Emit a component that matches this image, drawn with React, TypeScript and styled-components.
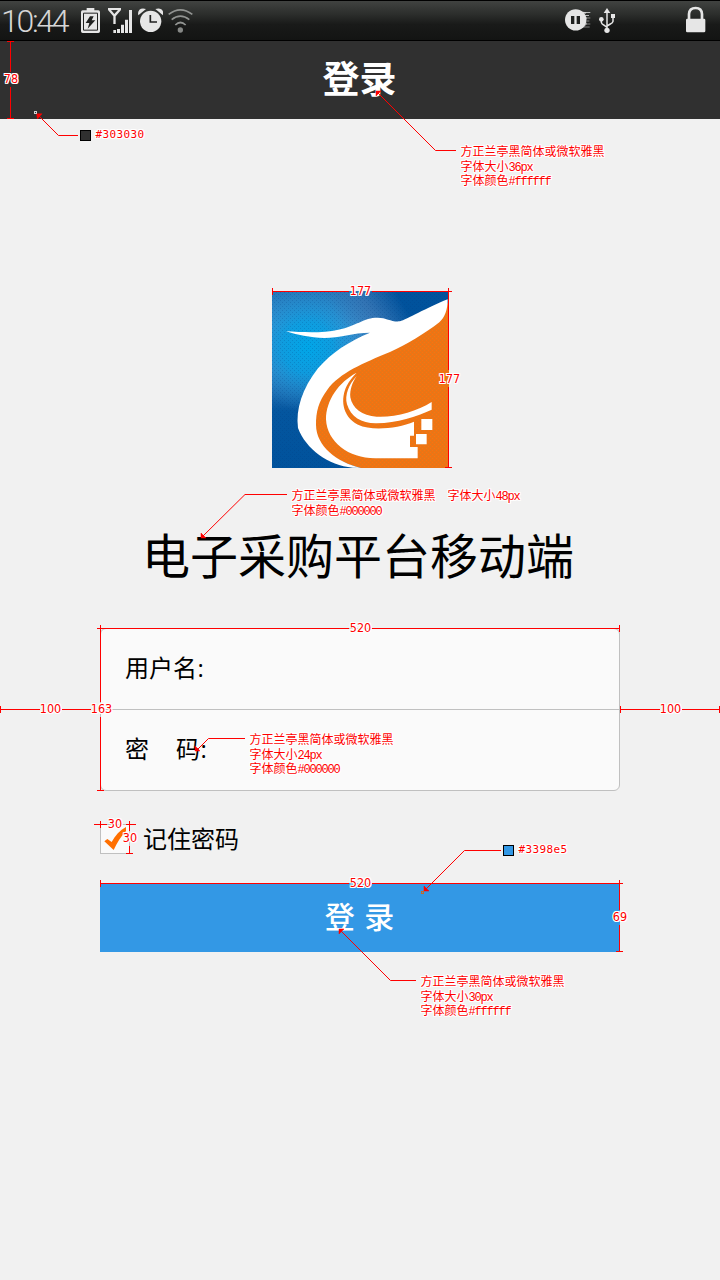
import React from 'react';
import styled, { createGlobalStyle } from 'styled-components';

const GlobalStyle = createGlobalStyle`
  *, *::before, *::after { box-sizing: border-box; }
  body { margin: 0; background: #f1f1f1; }
  h1, h2, p { margin: 0; }
`;

const sans = `'Noto Sans CJK SC', sans-serif`;

const Screen = styled.div`
  position: relative;
  width: 720px;
  height: 1280px;
  overflow: hidden;
  background: #f1f1f1;
  color: #000;
  font-family: ${sans};
`;

const StatusBar = styled.div`
  display: flex;
  align-items: center;
  height: 41px;
  border-top: 1px solid #000;
  border-bottom: 1px solid #000;
  background: linear-gradient(#414341 0%, #2b2d2b 35%, #191a19 60%, #131413 100%);
`;

const Clock = styled.span`
  width: 78px;
  padding-left: 1px;
  color: #d6d6d6;
  font: 300 32px/38px Roboto, sans-serif;
  letter-spacing: -2.3px;
  white-space: nowrap;
`;

const StatusIcon = styled.svg<{ $w: number; $gap?: number }>`
  flex: none;
  width: ${(p) => p.$w}px;
  height: 39px;
  margin-left: ${(p) => p.$gap ?? 0}px;
`;

const TitleBar = styled.header`
  display: flex;
  justify-content: center;
  height: 78px;
  background: #303030;
`;

const PageTitle = styled.h1`
  padding-right: 1px;
  color: #fff;
  font-size: 37px;
  font-weight: 700;
  line-height: 72px;
`;

const Content = styled.main`
  display: flex;
  flex-direction: column;
  width: 520px;
  margin: 172px auto 0;
`;

const Logo = styled.svg`
  display: block;
  width: 177px;
  height: 177px;
  margin-left: 172px;
`;

const AppName = styled.h2`
  height: 60px;
  margin-top: 55px;
  padding-right: 4px;
  font-size: 48px;
  font-weight: 400;
  line-height: 60px;
  text-align: center;
  white-space: nowrap;
`;

const Fields = styled.div`
  height: 163px;
  margin-top: 45px;
  border: 1px solid #c0c0c0;
  border-radius: 6px;
  background: #fafafa;
`;

const Field = styled.div`
  height: 80px;
  padding-left: 24px;
  font-size: 24px;
  line-height: 75px;
  & + & { height: 81px; border-top: 1px solid #c0c0c0; }
`;

const Wide = styled.span`
  margin-right: 27px;
`;

const Colon = styled.span`
  margin-left: 0.5px;
  font-family: 'Open Sans', sans-serif;
`;

const Remember = styled.label`
  display: flex;
  height: 30px;
  margin-top: 33px;
  font-size: 24px;
  line-height: 28px;
`;

const Checkbox = styled.span`
  width: 30px;
  height: 30px;
  margin-right: 13px;
  border: 1px solid #c0c0c0;
  background: #fafafa;
  svg { display: block; }
`;

const LoginButton = styled.button`
  height: 69px;
  margin-top: 29px;
  padding: 0 1px 4px 0;
  border: 0;
  background: #3398e5;
  color: #fff;
  font: 500 30px/65px ${sans};
  word-spacing: 3px;
`;

/* Specification layer laid over the screen */
const Overlay = styled.svg`
  position: absolute;
  inset: 0;
  width: 720px;
  height: 1280px;
  pointer-events: none;
`;

const halo = `
  color: #f00;
  white-space: nowrap;
  text-shadow: 1px 0 #fff, -1px 0 #fff, 0 1px #fff, 0 -1px #fff,
    1px 1px #fff, -1px -1px #fff, 1px -1px #fff, -1px 1px #fff;
`;

const Size = styled.span<{ $x: number; $y: number }>`
  position: absolute;
  left: ${(p) => p.$x}px;
  top: ${(p) => p.$y}px;
  transform: translate(-50%, -50%);
  font: 12.5px/14px 'DejaVu Sans Condensed', 'DejaVu Sans', sans-serif;
  font-stretch: condensed;
  ${halo}
`;

const Hex = styled.span<{ $x: number; $y: number }>`
  position: absolute;
  left: ${(p) => p.$x}px;
  top: ${(p) => p.$y}px;
  font: 11px/14px 'DejaVu Sans Mono', monospace;
  letter-spacing: 0.38px;
  ${halo}
`;

const Note = styled.div<{ $x: number; $y: number }>`
  position: absolute;
  left: ${(p) => p.$x}px;
  top: ${(p) => p.$y}px;
  font: 12px/14px ${sans};
  ${halo}
`;

const NoteLine = styled.p`
  height: 14px;
  &:first-child { height: 15px; line-height: 13px; }
`;

const Latin = styled.span`
  font-family: 'Liberation Mono', monospace;
  line-height: 1;
  letter-spacing: -1.2px;
`;

const FONT = '方正兰亭黑简体或微软雅黑';

const lines = [
  'M10.5 41V72M10.5 87V119M7 41.5H14M7 118.5H14',
  'M272 291.5H349M372 291.5H452M272.5 288V295M448.5 288V370M448.5 387V468M445 467.5H452',
  'M97 628.5H349M372 628.5H620M619.5 625V632M100.5 625V702M100.5 717V791M97 790.5H104',
  'M0 709.5H40M62 709.5H91M0.5 706V713M620 709.5H660M682 709.5H720M620.5 706V713M719.5 706V713',
  'M94 824.5H107M126 824.5H136M100.5 821V828M129.5 821V831M129.5 846V854M126 853.5H133',
  'M100 883.5H349M372 883.5H623M100.5 880V887M619.5 880V910M619.5 925V952M616 951.5H623',
];

const leaders = [
  'M38 115L58.5 135.5H78',
  'M378 93L435.5 150.5H456',
  'M202 537L245 494.5H287',
  'M197 750L208.5 738.5H245',
  'M425 890L464.5 850.5H501',
  'M341 931L390.5 980.5H416',
];

const arrows = [
  'M36.5 113.8H42L37.5 119Z',
  'M376 91H381L376 96Z',
  'M201 533V538H206Z',
  'M195 746V751H200Z',
  'M424 886V891H429Z',
  'M339 929H344L339 934Z',
];

const orangeField =
  'M567 60V564H303C230 546 160 499 160 435C160 395 170 365 195 329C235 278 305 249 380 210L538 120Z';

const LogoMark = () => (
  <Logo viewBox="36 33 531 531">
    <defs>
      <radialGradient id="cyan" cx="0.2" cy="0.32" r="0.36">
        <stop offset="0" stopColor="#00a6e8" />
        <stop offset="0.4" stopColor="#089fe2" stopOpacity="0.85" />
        <stop offset="1" stopColor="#2b8bce" stopOpacity="0" />
      </radialGradient>
      <linearGradient id="base" x1="0" y1="0" x2="0" y2="1">
        <stop offset="0" stopColor="#2377b9" />
        <stop offset="0.2" stopColor="#3a92d0" />
        <stop offset="0.45" stopColor="#3a84c3" />
        <stop offset="0.68" stopColor="#04569f" />
        <stop offset="1" stopColor="#00529c" />
      </linearGradient>
      <linearGradient id="shade" gradientUnits="userSpaceOnUse" x1="250" y1="150" x2="420" y2="55">
        <stop offset="0" stopColor="#3a78b8" stopOpacity="0" />
        <stop offset="0.5" stopColor="#3470b0" stopOpacity="0.8" />
        <stop offset="1" stopColor="#00529c" />
      </linearGradient>
      <pattern id="grain" width="12" height="12" patternUnits="userSpaceOnUse">
        <path d="M0 0h3v3H0zM6 6h3v3H6z" fill="#003a80" fillOpacity="0.22" />
      </pattern>
      <pattern id="weave" width="12" height="12" patternUnits="userSpaceOnUse">
        <path d="M0 0h3v3H0zM6 6h3v3H6z" fill="#c8822c" fillOpacity="0.5" />
        <path d="M6 0h3v3H6zM0 6h3v3H0z" fill="#ff7410" fillOpacity="0.6" />
      </pattern>
    </defs>
    <path d="M36 33H567V564H36Z" fill="url(#base)" />
    <path d="M36 33H567V564H36Z" fill="url(#cyan)" />
    <path d="M36 33H567V350H36Z" fill="url(#shade)" />
    <path d="M36 33H567V564H36Z" fill="url(#grain)" />
    <path d={orangeField} fill="#ee7413" />
    <path d={orangeField} fill="url(#weave)" />
    <path
      d="M78 154C130 157 190 160 235 149C290 138 310 113 353 113C380 113 395 127 420 124C440 119 500 83 563 58C563 90 554 113 538 127C495 160 440 194 390 216C310 249 240 278 202 329C175 365 168 395 168 435C169 499 230 546 303 564L278 563C205 556 138 508 114 444C107 388 126 326 174 265C215 217 267 184 330 158C280 158 237 174 193 174C150 173 110 164 78 154Z"
      fill="#fff"
    />
    <path
      d="M290 278C236 306 198 361 198 418C201 486 266 535 345 535H473V501H450V467H462V425C414 445 336 454 294 434C244 408 242 354 260 318C268 302 278 290 290 278Z"
      fill="#fff"
    />
    <path
      d="M290 288C267 312 253 346 261 373C272 411 306 431 350 430C411 429 470 409 515 389V366C470 394 405 413 350 410C306 407 277 385 271 352C269 329 277 307 290 288Z"
      fill="#fff"
    />
    <path d="M484 417H517V450H484ZM468 462H500V493H468Z" fill="#fff" />
  </Logo>
);

export default function App() {
  return (
    <Screen>
      <GlobalStyle />
      <StatusBar>
        <Clock>10:44</Clock>
        <StatusIcon $w={24} $gap={2} viewBox="240 3 72 117" fill="#e6e6e6">
          <path d="M260 24H283V31H295Q300 31 300 36V94Q300 99 295 99H248Q243 99 243 94V36Q243 31 248 31H260Z" />
          <path d="M250.5 39.5H292.5V90.5H250.5Z" fill="none" stroke="#202120" strokeWidth="3" />
          <path d="M270 49H281L275 61H286L263 86L268 69H257Z" fill="#202120" />
        </StatusIcon>
        <StatusIcon $w={28} $gap={3} viewBox="321 3 84 117" fill="#e6e6e6">
          <path
            fillRule="evenodd"
            d="M324 24H363V30L347 49V72H340V49L324 30ZM333 30L343 42L354 30Z"
          />
          <path d="M340 90H348V99H340ZM351 87H360V99H351ZM363 74H372V99H363ZM375 59H384V99H375ZM387 30H396V99H387Z" />
        </StatusIcon>
        <StatusIcon $w={26} $gap={2} viewBox="411 3 78 117" fill="#e6e6e6">
          <circle cx="452" cy="64" r="32" />
          <path d="M415 46C411 31 422 21 438 27ZM489 46C493 31 482 21 466 27Z" />
          <path d="M451 45V66H471" fill="none" stroke="#202120" strokeWidth="5" />
        </StatusIcon>
        <StatusIcon $w={28} $gap={4} viewBox="501 3 84 117" fill="none" stroke="#929492" strokeWidth="5">
          <path d="M506 43Q541 16 577 43M515 59Q541 38 568 59M526 75Q541 60 557 75" />
          <circle cx="541" cy="90" r="8" fill="#868886" stroke="none" />
        </StatusIcon>
        <StatusIcon $w={28} $gap={369} viewBox="72 3 84 117" fill="#e6e6e6">
          <path d="M122 36H151V38H122ZM122 45H147V47H122ZM122 53H151V55H122ZM122 62H148V64H122ZM122 71H151V73H122ZM118 80H149V82H118Z" />
          <path d="M120 34L140 37L134 45L141 54L137 63L141 72L132 81L120 84Z" fillOpacity="0.6" />
          <circle cx="107" cy="59.5" r="32" />
          <path d="M93 48H103V72H93ZM110 48H120V72H110Z" fill="#202120" />
        </StatusIcon>
        <StatusIcon $w={20} $gap={6} viewBox="174 3 60 117" fill="#e6e6e6">
          <path d="M184 58V67Q185 72 191 75L201 82M219 52V64Q218 69 211 72L201 78M201 35V91" fill="none" stroke="#e6e6e6" strokeWidth="4.5" />
          <path d="M201 24L211 39H191ZM213 42H225V54H213Z" />
          <circle cx="184" cy="58" r="7" />
          <circle cx="201" cy="91" r="8" />
        </StatusIcon>
        <StatusIcon $w={22} $gap={67} viewBox="435 3 66 117" fill="#e6e6e6">
          <rect x="438" y="56" width="58" height="41" rx="4" />
          <path d="M447 60V42Q448 24 467 24Q485 24 486 42V60" fill="none" stroke="#e6e6e6" strokeWidth="8" />
        </StatusIcon>
      </StatusBar>

      <TitleBar>
        <PageTitle>登录</PageTitle>
      </TitleBar>

      <Content>
        <LogoMark />
        <AppName>电子采购平台移动端</AppName>
        <Fields>
          <Field>
            用户名<Colon>:</Colon>
          </Field>
          <Field>
            <Wide>密</Wide>码<Colon>:</Colon>
          </Field>
        </Fields>
        <Remember>
          <Checkbox>
            <svg width="28" height="28" viewBox="63 46 84 84">
              <path d="M73 95L82 88L95 97C105 78 120 62 138 52V64C123 80 111 100 101 121Z" fill="#ff6f00" />
            </svg>
          </Checkbox>
          记住密码
        </Remember>
        <LoginButton>登 录</LoginButton>
      </Content>

      <Overlay viewBox="0 0 720 1280">
        {lines.map((d) => (
          <path key={d} d={d} fill="none" stroke="#f00" shapeRendering="crispEdges" />
        ))}
        {leaders.map((d) => (
          <path key={d} d={d} fill="none" stroke="#f00" />
        ))}
        {arrows.map((d) => (
          <path key={d} d={d} fill="#f00" stroke="#f00" strokeWidth="0.5" />
        ))}
        <rect x="34.5" y="111.5" width="2" height="2" fill="#303030" stroke="#d0d0d0" />
        <rect x="421.5" y="891.5" width="2" height="2" fill="#3398e5" stroke="#c26a2c" />
        <rect x="80.5" y="130.5" width="10" height="10" fill="#303030" stroke="#000" />
        <rect x="503.5" y="845.5" width="10" height="10" fill="#3398e5" stroke="#000" />
      </Overlay>

      <Size $x={11} $y={79}>78</Size>
      <Size $x={360.5} $y={291}>177</Size>
      <Size $x={449.5} $y={379}>177</Size>
      <Size $x={360.5} $y={628}>520</Size>
      <Size $x={50.5} $y={709}>100</Size>
      <Size $x={101.5} $y={709}>163</Size>
      <Size $x={670.5} $y={709}>100</Size>
      <Size $x={115} $y={824}>30</Size>
      <Size $x={130} $y={838}>30</Size>
      <Size $x={360.5} $y={883}>520</Size>
      <Size $x={620} $y={917}>69</Size>

      <Hex $x={95.5} $y={128}>#303030</Hex>
      <Hex $x={518.5} $y={843}>#3398e5</Hex>

      <Note $x={460.5} $y={144}>
        <NoteLine>{FONT}</NoteLine>
        <NoteLine>字体大小<Latin>36px</Latin></NoteLine>
        <NoteLine>字体颜色<Latin>#ffffff</Latin></NoteLine>
      </Note>
      <Note $x={291.5} $y={488}>
        <NoteLine>{FONT}　字体大小<Latin>48px</Latin></NoteLine>
        <NoteLine>字体颜色<Latin>#000000</Latin></NoteLine>
      </Note>
      <Note $x={249.5} $y={732}>
        <NoteLine>{FONT}</NoteLine>
        <NoteLine>字体大小<Latin>24px</Latin></NoteLine>
        <NoteLine>字体颜色<Latin>#000000</Latin></NoteLine>
      </Note>
      <Note $x={420.5} $y={974}>
        <NoteLine>{FONT}</NoteLine>
        <NoteLine>字体大小<Latin>30px</Latin></NoteLine>
        <NoteLine>字体颜色<Latin>#ffffff</Latin></NoteLine>
      </Note>
    </Screen>
  );
}
